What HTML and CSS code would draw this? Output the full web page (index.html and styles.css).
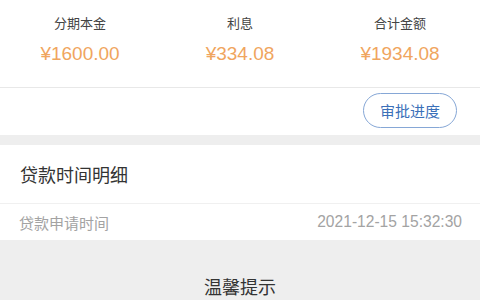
FILE: index.html
```html
<!DOCTYPE html>
<html lang="zh-CN">
<head>
    <meta charset="UTF-8">
    <meta name="viewport" content="width=device-width, initial-scale=1.0">
    <title>贷款详情</title>
    <link rel="stylesheet" href="styles.css">
</head>
<body>
    <main class="page">
        <section class="summary">
            <div class="summary-item">
                <div class="summary-label">分期本金</div>
                <div class="summary-value">¥1600.00</div>
            </div>
            <div class="summary-item">
                <div class="summary-label">利息</div>
                <div class="summary-value">¥334.08</div>
            </div>
            <div class="summary-item">
                <div class="summary-label">合计金额</div>
                <div class="summary-value">¥1934.08</div>
            </div>
        </section>

        <div class="action-bar">
            <button class="progress-button">审批进度</button>
        </div>

        <div class="gap"></div>

        <section class="detail">
            <h2 class="detail-title">贷款时间明细</h2>
            <div class="detail-row">
                <span class="detail-label">贷款申请时间</span>
                <span class="detail-value">2021-12-15 15:32:30</span>
            </div>
        </section>

        <section class="tips">
            <h3 class="tips-title">温馨提示</h3>
        </section>
    </main>
</body>
</html>
```

FILE: styles.css
```css
:root {
    --text-color: #333;
    --muted-color: #a3a3a3;
    --accent-color: #f0a55e;
    --link-color: #3b70b9;
    --border-color: #e8e8e8;
    --gray-bg: #eeeeee;
}

* {
    margin: 0;
    padding: 0;
    box-sizing: border-box;
}

html, body {
    height: 100%;
}

body {
    font-family: "Liberation Sans", "Noto Sans CJK SC", sans-serif;
    color: var(--text-color);
    background-color: var(--gray-bg);
    overflow: hidden;
}

.page {
    background-color: #fff;
}

.summary {
    display: grid;
    grid-template-columns: repeat(3, 1fr);
    padding-top: 15px;
    height: 88px;
    border-bottom: 1px solid var(--border-color);
}

.summary-item {
    text-align: center;
}

.summary-label {
    font-size: 13px;
    line-height: 18px;
    color: #444;
}

.summary-value {
    margin-top: 10px;
    font-size: 19px;
    line-height: 22px;
    color: var(--accent-color);
}

.action-bar {
    display: flex;
    justify-content: flex-end;
    align-items: center;
    height: 47px;
    padding: 0 23px 2px 0;
}

.progress-button {
    width: 94px;
    height: 35px;
    border: 1px solid #86a7d6;
    border-radius: 18px;
    background: #fff;
    color: var(--link-color);
    font-family: inherit;
    font-size: 15px;
}

.gap {
    height: 10px;
    background-color: var(--gray-bg);
}

.detail-title {
    font-size: 18px;
    font-weight: normal;
    line-height: 24px;
    padding: 19px 20px 15px;
    border-bottom: 1px solid #f0f0f0;
}

.detail-row {
    display: flex;
    justify-content: space-between;
    align-items: center;
    height: 36px;
    padding: 0 18px 0 19px;
    font-size: 15px;
    color: var(--muted-color);
}

.detail-value {
    font-size: 15.6px;
}

.tips {
    background-color: var(--gray-bg);
    padding-top: 38px;
    text-align: center;
}

.tips-title {
    font-size: 18px;
    font-weight: normal;
    line-height: 20px;
}
```
